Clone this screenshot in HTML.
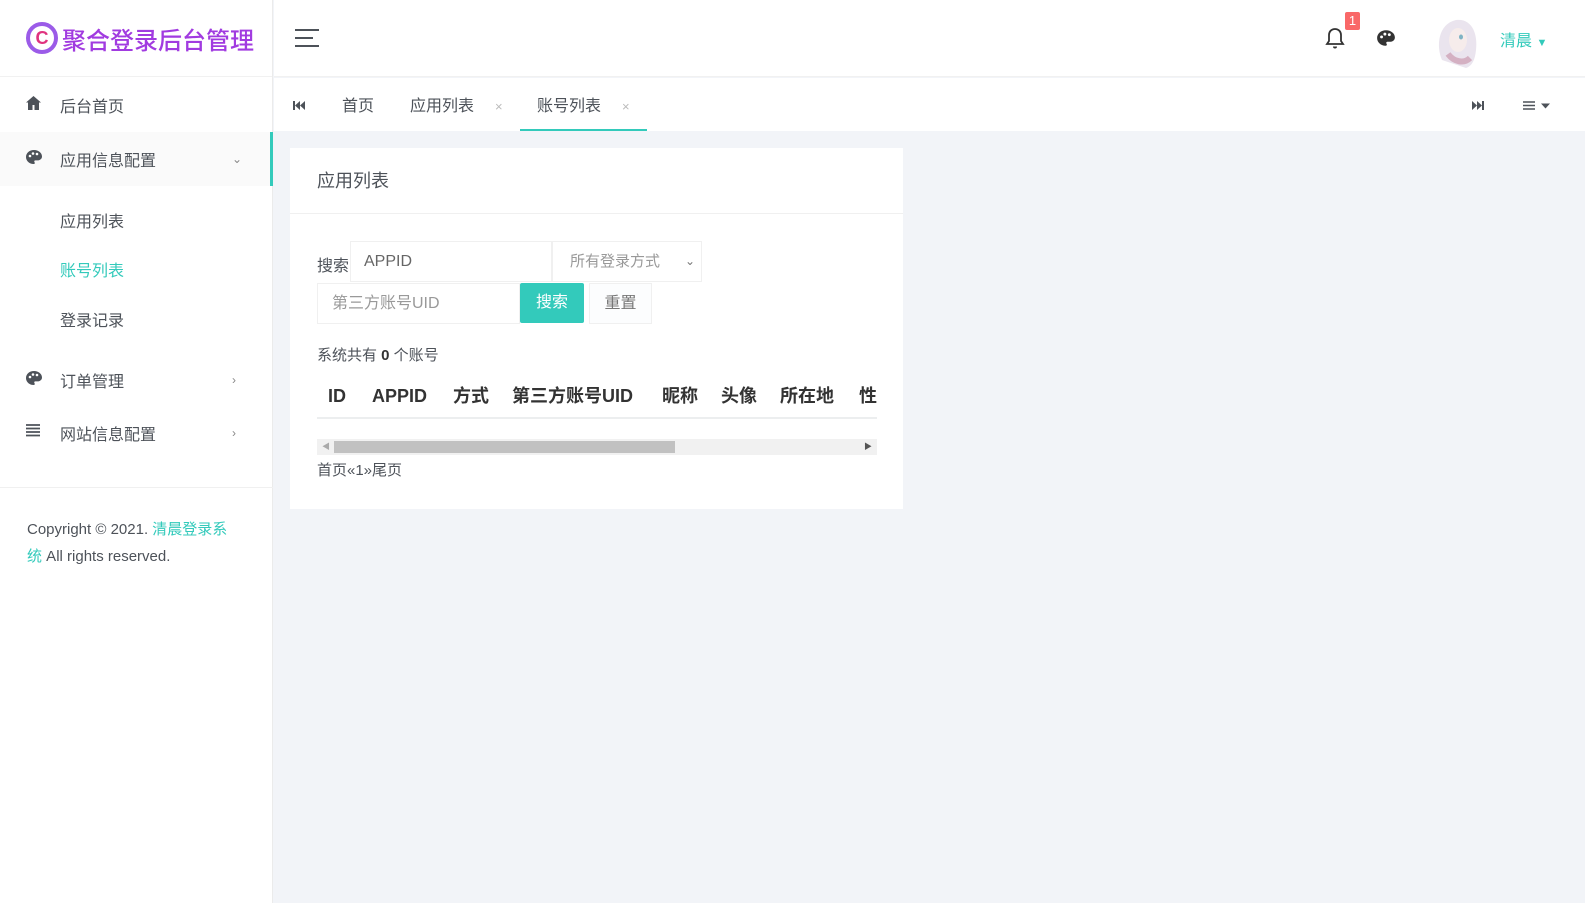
<!DOCTYPE html>
<html><head><meta charset="utf-8"><style>
*{margin:0;padding:0;box-sizing:border-box}
body{width:1585px;height:903px;overflow:hidden;background:#f2f4f8;font-family:"Liberation Sans","Noto Sans CJK SC",sans-serif;color:#4d5259;font-size:15px;position:relative}
.side{position:absolute;left:0;top:0;width:273px;height:903px;background:#fff;border-right:1px solid #ebebeb}
.logo{height:77px;border-bottom:1px solid #f1f1f1;display:flex;align-items:center;padding-left:26px;color:#a13be0;font-size:24px;font-weight:500}
.logo .c{width:32px;height:32px;border-radius:50%;border:4px solid #9b5be8;color:#e0337f;font-size:18px;display:flex;align-items:center;justify-content:center;margin-right:4px;font-weight:bold}
.mi{position:absolute;left:0;width:273px;display:flex;align-items:center;font-size:16px;color:#4d5259}
.mi .ic{position:absolute;left:25px}
.mi .t{position:absolute;left:60px}
.mi .ar{position:absolute;left:232px;font-size:12px;color:#888}
.sub{position:absolute;left:60px;font-size:16px}
.hdr{position:absolute;left:274px;top:0;right:0;height:77px;background:#fff;border-bottom:1px solid #f1f1f1}
.tabs{position:absolute;left:274px;top:78px;right:0;height:53px;background:#fff}
.tab{position:absolute;top:0;height:53px;line-height:58px;font-size:16px;color:#4d5259}
.x{position:absolute;top:0;line-height:58px;color:#bbb;font-size:13px}
.card{position:absolute;left:290px;top:148px;width:613px;height:361px;background:#fff}
.card .h{height:66px;border-bottom:1px solid #f0f0f0;padding-left:27px;line-height:67px;font-size:18px;color:#4d5259}
.inp{position:absolute;border:1px solid #f0f0f0;background:#fff;font-size:16px;color:#999;line-height:39px}
.th span{position:absolute;top:8px;line-height:24px;display:block}
</style></head><body>
<div class="side">
 <div class="logo"><div class="c">C</div>聚合登录后台管理</div>
 <div class="mi" style="top:78px;height:54px"><span class="ic"><svg width="17" height="16" viewBox="0 0 17 16"><path d="M8.5 1L1 7.5h2V15h4.5v-5h2v5H14V7.5h2z" fill="#4d5259"/></svg></span><span class="t">后台首页</span></div>
 <div class="mi" style="top:132px;height:54px;background:#fafafa"><span class="ic"><svg width="18" height="16" viewBox="0 0 18 16"><path d="M9 1C4.5 1 1 4 1 8c0 4 3.5 7 7.5 7 1.3 0 1.6-1 1-1.8-.6-.8-.2-1.8.9-1.8h2.2C15 11.4 17 9.8 17 7.5 17 3.8 13.4 1 9 1z" fill="#4d5259"/><circle cx="5" cy="7" r="1.3" fill="#fff"/><circle cx="8" cy="4.5" r="1.3" fill="#fff"/><circle cx="12" cy="5" r="1.3" fill="#fff"/></svg></span><span class="t">应用信息配置</span><span class="ar">⌄</span></div>
 <div style="position:absolute;left:270px;top:132px;width:3px;height:54px;background:#33cabb"></div>
 <div class="sub" style="top:208px">应用列表</div>
 <div class="sub" style="top:257px;color:#33cabb">账号列表</div>
 <div class="sub" style="top:307px">登录记录</div>
 <div class="mi" style="top:353px;height:54px"><span class="ic"><svg width="18" height="16" viewBox="0 0 18 16"><path d="M9 1C4.5 1 1 4 1 8c0 4 3.5 7 7.5 7 1.3 0 1.6-1 1-1.8-.6-.8-.2-1.8.9-1.8h2.2C15 11.4 17 9.8 17 7.5 17 3.8 13.4 1 9 1z" fill="#4d5259"/><circle cx="5" cy="7" r="1.3" fill="#fff"/><circle cx="8" cy="4.5" r="1.3" fill="#fff"/><circle cx="12" cy="5" r="1.3" fill="#fff"/></svg></span><span class="t">订单管理</span><span class="ar">›</span></div>
 <div class="mi" style="top:406px;height:54px"><span class="ic"><svg width="16" height="16" viewBox="0 0 16 16"><path d="M1 2h14M1 5.5h14M1 9h14M1 12.5h14" stroke="#4d5259" stroke-width="1.8"/></svg></span><span class="t">网站信息配置</span><span class="ar">›</span></div>
 <div style="position:absolute;left:0;top:487px;width:273px;border-top:1px solid #f0f0f0"></div>
 <div style="position:absolute;left:27px;top:516px;width:214px;font-size:15px;line-height:27px;color:#4d5259">Copyright © 2021. <span style="color:#33cabb">清晨登录系统</span> All rights reserved.</div>
</div>
<div class="hdr">
 <svg style="position:absolute;left:21px;top:28px" width="24" height="20" viewBox="0 0 24 20"><path d="M0 2h24M0 10h18M0 18h24" stroke="#4d5259" stroke-width="2"/></svg>
 <svg style="position:absolute;left:1051px;top:27px" width="20" height="22" viewBox="0 0 20 22"><path d="M10 2c-3.5 0-6 2.5-6 6v6l-2 3h16l-2-3V8c0-3.5-2.5-6-6-6z" fill="none" stroke="#333" stroke-width="1.8"/><path d="M8 19.5a2 2 0 004 0" fill="#333"/></svg>
 <div style="position:absolute;left:1071px;top:12px;width:15px;height:18px;background:#f96868;color:#fff;font-size:13px;text-align:center;line-height:18px;border-radius:2px">1</div>
 <svg style="position:absolute;left:1102px;top:28px" width="20" height="20" viewBox="0 0 18 16"><path d="M9 1C4.5 1 1 4 1 8c0 4 3.5 7 7.5 7 1.3 0 1.6-1 1-1.8-.6-.8-.2-1.8.9-1.8h2.2C15 11.4 17 9.8 17 7.5 17 3.8 13.4 1 9 1z" fill="#333"/><circle cx="5" cy="7" r="1.3" fill="#fff"/><circle cx="8" cy="4.5" r="1.3" fill="#fff"/><circle cx="12" cy="5" r="1.3" fill="#fff"/></svg>
 <svg style="position:absolute;left:1154px;top:10px" width="60" height="60" viewBox="0 0 60 60"><path d="M14 50C8 36 10 14 28 10c16-2 22 14 20 30-1 10-4 16-10 18z" fill="#eae4ee"/><ellipse cx="30" cy="30" rx="9" ry="12" fill="#f6eceb"/><ellipse cx="33" cy="27" rx="2" ry="2.5" fill="#7fb3c4"/><path d="M20 44c6 8 16 10 22 4" stroke="#d4b0c2" stroke-width="6" fill="none"/></svg>
 <div style="position:absolute;left:1226px;top:27px;color:#33cabb;font-size:16px">清晨 <span style="font-size:11px">▼</span></div>
</div>
<div class="tabs">
 <svg style="position:absolute;left:19px;top:23px" width="12" height="9" viewBox="0 0 12 9"><path d="M0 0h2v9H0zM7 0v9L2 4.5zM12 0v9L7 4.5z" fill="#4d5259"/></svg>
 <div class="tab" style="left:68px">首页</div>
 <div class="tab" style="left:136px">应用列表</div><div class="x" style="left:221px">×</div>
 <div class="tab" style="left:246px;width:127px;padding-left:17px;border-bottom:2px solid #33cabb">账号列表</div><div class="x" style="left:348px">×</div>
 <svg style="position:absolute;left:1198px;top:23px" width="12" height="9" viewBox="0 0 12 9"><path d="M0 0v9l5-4.5zM5 0v9l5-4.5zM10 0h2v9h-2z" fill="#4d5259"/></svg>
 <svg style="position:absolute;left:1249px;top:23px" width="28" height="9" viewBox="0 0 28 9"><path d="M0 1h12M0 4.5h12M0 8h12" stroke="#4d5259" stroke-width="1.4"/><path d="M18 2.5h9l-4.5 5z" fill="#4d5259"/></svg>
</div>
<div class="card">
 <div class="h">应用列表</div>
 <div style="position:absolute;left:27px;top:104px;font-size:16px">搜索</div>
 <div class="inp" style="left:60px;top:93px;width:202px;height:41px;padding-left:13px;color:#666">APPID</div>
 <div class="inp" style="left:262px;top:93px;width:150px;height:41px;padding-left:17px;font-size:15px">所有登录方式 <span style="position:absolute;right:6px;font-size:12px;color:#777">⌄</span></div>
 <div class="inp" style="left:27px;top:135px;width:203px;height:41px;padding-left:14px">第三方账号UID</div>
 <div style="position:absolute;left:230px;top:135px;width:64px;height:40px;background:#33cabb;color:#fff;font-size:16px;text-align:center;line-height:40px;border-radius:2px">搜索</div>
 <div class="inp" style="left:299px;top:135px;width:63px;height:41px;text-align:center;background:#fcfdfe;color:#777">重置</div>
 <div style="position:absolute;left:27px;top:196px;font-size:15px">系统共有 <b style="color:#333">0</b> 个账号</div>
 <div class="th" style="position:absolute;left:27px;top:228px;width:560px;height:43px;border-bottom:2px solid #eceeef;font-size:18px;font-weight:bold;color:#333;white-space:nowrap;overflow:hidden">
  <span style="left:11px">ID</span><span style="left:55px">APPID</span><span style="left:136px">方式</span><span style="left:195px">第三方账号UID</span><span style="left:345px">昵称</span><span style="left:404px">头像</span><span style="left:463px">所在地</span><span style="left:542px">性</span>
 </div>
 <div style="position:absolute;left:27px;top:291px;width:560px;height:16px;background:#f1f1f1">
  <div style="position:absolute;left:17px;top:2px;width:341px;height:12px;background:#c1c1c1"></div>
  <span style="position:absolute;left:5px;top:0;font-size:8px;color:#aaa;line-height:16px">◀</span>
  <span style="position:absolute;right:5px;top:0;font-size:8px;color:#555;line-height:16px">▶</span>
 </div>
 <div style="position:absolute;left:27px;top:311px;font-size:15px">首页«1»尾页</div>
</div>
</body></html>
